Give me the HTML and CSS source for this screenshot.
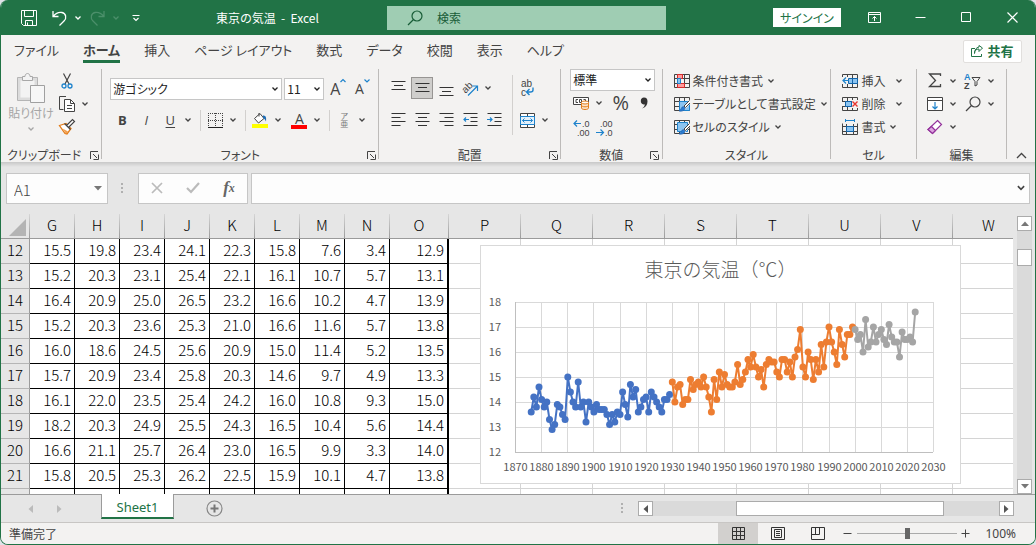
FILE: index.html
```html
<!DOCTYPE html>
<html lang="ja">
<head>
  <meta charset="UTF-8" />
  <meta name="viewport" content="width=device-width, initial-scale=1.0"/>
  <title>東京の気温 - Excel</title>
  <link rel="stylesheet" href="styles.css">
</head>
<body>
  <svg class="defs" aria-hidden="true">
    <symbol id="chev" viewBox="0 0 8 8"><path d="M1.5 2.5 4 5l2.500-2.500" fill="none" stroke="currentColor" stroke-width="1.300"/></symbol>
    <symbol id="launch" viewBox="0 0 9 9"><path d="M.5 8V.5H8M3 3l4 4M8.500 3.500v5h-5" fill="none" stroke="currentColor"/></symbol>
    <symbol id="lens" viewBox="0 0 16 16"><circle cx="10" cy="6" r="5" fill="none" stroke="currentColor" stroke-width="1.200"/><path d="M6.500 9.500 1 15" stroke="currentColor" stroke-width="1.300"/></symbol>
    <symbol id="table" viewBox="0 0 16 16"><path d="M.5 1.500h15v13H.5zM.5 5.500h15M.5 10.500h15M5.500 1.500v13M10.500 1.500v13" fill="none" stroke="#444"/></symbol>
    <symbol id="brushpen" viewBox="0 0 16 16"><path d="M16 3.500 9.500 10 6 15.500l5-2L16 8z" fill="#f3f2f1"/><path d="M15.500 4.500 10 10l1.500 1.500L16 7" fill="#fff" stroke="#444"/><path d="M9.500 10.500c-2 0-2 3-4.500 4.500 3 .5 6-.5 6-3z" fill="#2b7cd3" stroke="#1e5fa8" stroke-width=".7"/></symbol>
  </svg>

  <div class="window">
    <header class="titlebar">
      <div class="quick">
        <button class="tb-btn" aria-label="上書き保存"><svg width="16" height="16" viewBox="0 0 16 16"><path d="M.5.500h15v15h-13l-2-2zM3.500.500v6h9v-6M4.500 15.500v-5h7v5M6.500 12.500v3" fill="none" stroke="#fff"/></svg></button>
        <button class="tb-btn" aria-label="元に戻す"><svg width="15" height="16" viewBox="0 0 15 16"><path d="M1 1v5.500h5.500M1.300 6.200C4 3 7 1.800 10 2.500c4 1 5 5.500 2 8.500L7.500 15.500" fill="none" stroke="#fff" stroke-width="1.300"/></svg></button>
        <button class="tb-drop" aria-label="元に戻す一覧"><svg width="8" height="8"><use href="#chev"/></svg></button>
        <button class="tb-btn faded" aria-label="やり直し"><svg width="15" height="16" viewBox="0 0 15 16"><path d="M14 1v5.500H8.500M13.700 6.200C11 3 8 1.800 5 2.500 1 3.500 0 8 3 11l4.500 4.500" fill="none" stroke="currentColor" stroke-width="1.300"/></svg></button>
        <button class="tb-drop faded" aria-label="やり直し一覧"><svg width="8" height="8"><use href="#chev"/></svg></button>
        <button class="tb-drop customize" aria-label="カスタマイズ"><svg width="8" height="8" viewBox="0 0 8 8"><path d="M.5 1.500h7M1.500 4 4 6.500 6.500 4" fill="none" stroke="#fff" stroke-width="1.200"/></svg></button>
      </div>
      <div class="doc-title">東京の気温&nbsp; -&nbsp; Excel</div>
      <label class="search">
        <svg width="16" height="16"><use href="#lens"/></svg>
        <input type="text" placeholder="検索" aria-label="検索">
      </label>
      <div class="win-tools">
        <button class="signin">サインイン</button>
        <button class="win-btn" aria-label="リボンの表示オプション"><svg width="13" height="11" viewBox="0 0 13 11"><path d="M.5.500h12v10H.5zM.5 2.500h12M6.500 9V4.500M4.500 6.500l2-2 2 2" fill="none" stroke="#fff"/></svg></button>
        <button class="win-btn" aria-label="最小化"><svg width="11" height="11" viewBox="0 0 11 11"><path d="M.5 5.500h10" stroke="#fff"/></svg></button>
        <button class="win-btn" aria-label="最大化"><svg width="11" height="11" viewBox="0 0 11 11"><path d="M.5.500h9v9h-9z" fill="none" stroke="#fff"/></svg></button>
        <button class="win-btn" aria-label="閉じる"><svg width="11" height="11" viewBox="0 0 11 11"><path d="m.5.500 10 10M10.500.500l-10 10" stroke="#fff" stroke-width="1.200"/></svg></button>
      </div>
    </header>

    <nav class="tabs">
      <a href="#">ファイル</a>
      <a href="#" class="active">ホーム</a>
      <a href="#">挿入</a>
      <a href="#">ページ レイアウト</a>
      <a href="#">数式</a>
      <a href="#">データ</a>
      <a href="#">校閲</a>
      <a href="#">表示</a>
      <a href="#">ヘルプ</a>
      <button class="share"><svg width="12" height="12" viewBox="0 0 12 12"><path d="M4 3.500H.5v8h10V9M3.500 8.500c0-3 1.500-4.500 4.500-4.500v2.500l3.500-3.500L8 .500V2C5 2.500 3.500 5 3.500 8.500z" fill="none" stroke="#217346"/></svg>共有</button>
    </nav>

    <div class="ribbon">
      <section class="group clip">
        <div class="tools">
          <button class="paste" disabled>
            <svg width="28" height="30" viewBox="0 0 28 30"><path d="M.5 4.500h20v23H.5z" fill="#dcdcdc" stroke="#b5b5b5"/><path d="M3.500 7.500h14v17h-14z" fill="#f3f3f3"/><path d="M5.500 7.500v-4H8c0-4 5-4 5 0h2.500v4z" fill="#f3f3f3" stroke="#a8a8a8"/><path d="M13.500 12.500h14v17h-14z" fill="#f7f7f7" stroke="#a0a0a0"/></svg>
            <span>貼り付け</span>
            <svg width="8" height="8"><use href="#chev"/></svg>
          </button>
          <div class="clip-side">
            <button class="tool" aria-label="切り取り"><svg width="12" height="16" viewBox="0 0 12 16"><path d="M2.500.500 8 11M9.500.500 4 11" stroke="#444" stroke-width="1.200"/><circle cx="3" cy="13" r="2" fill="none" stroke="#1e83cc" stroke-width="1.300"/><circle cx="9" cy="13" r="2" fill="none" stroke="#1e83cc" stroke-width="1.300"/></svg></button>
            <div class="row"><button class="tool" aria-label="コピー"><svg width="16" height="16" viewBox="0 0 16 16"><path d="M4.500 13.500h-4V.500h6.500" fill="none" stroke="#444"/><path d="M5.500 3.500h6l4 4v8h-10z" fill="#fff" stroke="#444"/><path d="M11.500 3.500v4h4M8 9.500h5M8 12.500h5" fill="none" stroke="#444"/></svg></button><button class="drop" aria-label="コピー一覧"><svg width="8" height="8"><use href="#chev"/></svg></button></div>
            <button class="tool" aria-label="書式のコピー"><svg width="16" height="16" viewBox="0 0 16 16"><path d="M.5 6.500 7 4.500l5 5-4 5.500-2-.5z" fill="#fff" stroke="#e37d1b" stroke-width="1.300"/><path d="M3.500 9.500 9 12.500 7 15z" fill="#f3a04e"/><path d="m7.500 6.500 6-6 2 2-6 6zM5.500 4.500l6 6" fill="#fff" stroke="#444" stroke-width="1.200"/></svg></button>
          </div>
        </div>
        <footer><span>クリップボード</span><button class="launcher" aria-label="クリップボード設定"><svg width="9" height="9"><use href="#launch"/></svg></button></footer>
      </section>

      <section class="group font">
        <div class="tools">
          <div class="row">
            <div class="combo wide"><select aria-label="フォント"><option>游ゴシック</option></select><svg width="8" height="8"><use href="#chev"/></svg></div>
            <div class="combo size"><select aria-label="フォント サイズ"><option>11</option></select><svg width="8" height="8"><use href="#chev"/></svg></div>
            <button class="tool letter big" aria-label="フォント サイズの拡大">A<svg width="6" height="12" viewBox="0 0 6 12"><path d="m.5 4 2.500-2.500L5.500 4" fill="none" stroke="#1e83cc" stroke-width="1.200"/></svg></button>
            <button class="tool letter" aria-label="フォント サイズの縮小">A<svg width="6" height="12" viewBox="0 0 6 12"><path d="M.5 1.500 3 4l2.500-2.500" fill="none" stroke="#1e83cc" stroke-width="1.200"/></svg></button>
          </div>
          <div class="row">
            <button class="tool b">B</button><button class="tool i">I</button><button class="tool u">U</button><button class="drop" aria-label="下線一覧"><svg width="8" height="8"><use href="#chev"/></svg></button>
            <i class="sep"></i>
            <button class="tool" aria-label="罫線"><svg width="15" height="15" viewBox="0 0 15 15"><path d="M.5 0v14M7.500 0v14M14.500 0v14M0 .5h15M0 7.500h15" fill="none" stroke="#444" stroke-dasharray="1 1"/><path d="M0 14.500h15" stroke="#222"/></svg></button><button class="drop" aria-label="罫線一覧"><svg width="8" height="8"><use href="#chev"/></svg></button>
            <i class="sep"></i>
            <button class="tool" aria-label="塗りつぶしの色"><svg width="16" height="16" viewBox="0 0 16 16"><path d="m2.500 6.500 5.500-5 4 5-5.500 4.500zM7 4.500V1" fill="#fff" stroke="#444"/><path d="M11 3.500c3 0 3.500 2 3 6-1-2-1.500-3-3-3.500z" fill="#1e6db5"/><path d="M0 12h16v4H0z" fill="#ff0"/></svg></button><button class="drop" aria-label="塗りつぶしの色一覧"><svg width="8" height="8"><use href="#chev"/></svg></button>
            <button class="tool fontcolor" aria-label="フォントの色"><span>A</span></button><button class="drop" aria-label="フォントの色一覧"><svg width="8" height="8"><use href="#chev"/></svg></button>
            <i class="sep"></i>
            <button class="tool ruby"><span>ア</span><span>亜</span></button><button class="drop" aria-label="ふりがな一覧"><svg width="8" height="8"><use href="#chev"/></svg></button>
          </div>
        </div>
        <footer><span>フォント</span><button class="launcher" aria-label="フォント設定"><svg width="9" height="9"><use href="#launch"/></svg></button></footer>
      </section>

      <section class="group align">
        <div class="tools">
          <div class="align-rows">
            <div class="row">
              <button class="tool" aria-label="上揃え"><svg width="15" height="16" viewBox="0 0 15 16"><path d="M.5 1.500h14M3 5.500h9M.5 9.500h14" stroke="#333"/></svg></button>
              <button class="tool pressed" aria-label="上下中央揃え"><svg width="15" height="16" viewBox="0 0 15 16"><path d="M.5 3.500h14M3 7.500h9M.5 11.500h14" stroke="#333"/></svg></button>
              <button class="tool" aria-label="下揃え"><svg width="15" height="16" viewBox="0 0 15 16"><path d="M.5 7.500h14M3 11.500h9M.5 15.500h14" stroke="#333"/></svg></button>
              <button class="tool" aria-label="方向"><svg width="17" height="16" viewBox="0 0 17 16"><text x="0" y="11" class="ico-text" transform="rotate(-45 5 8)">ab</text><path d="M6 15.500 15 6.500M10.500 6H15.500v5" fill="none" stroke="#1e83cc" stroke-width="1.200"/></svg></button><button class="drop" aria-label="方向一覧"><svg width="8" height="8"><use href="#chev"/></svg></button>
            </div>
            <div class="row">
              <button class="tool" aria-label="左揃え"><svg width="15" height="14" viewBox="0 0 15 14"><path d="M.5.500h14M.5 4.500h9M.5 8.500h14M.5 12.500h9" stroke="#333"/></svg></button>
              <button class="tool" aria-label="中央揃え"><svg width="15" height="14" viewBox="0 0 15 14"><path d="M.5.500h14M3 4.500h9M.5 8.500h14M3 12.500h9" stroke="#333"/></svg></button>
              <button class="tool" aria-label="右揃え"><svg width="15" height="14" viewBox="0 0 15 14"><path d="M.5.500h14M5.500 4.500h9M.5 8.500h14M5.500 12.500h9" stroke="#333"/></svg></button>
              <button class="tool" aria-label="インデントを減らす"><svg width="15" height="14" viewBox="0 0 15 14"><path d="M.5.500h14M7.500 4.500h7M7.500 8.500h7M.5 12.500h14" stroke="#333"/><path d="M6 6.500H1M3 4.500l-2 2 2 2" fill="none" stroke="#1e83cc" stroke-width="1.200"/></svg></button>
              <button class="tool" aria-label="インデントを増やす"><svg width="15" height="14" viewBox="0 0 15 14"><path d="M.5.500h14M7.500 4.500h7M7.500 8.500h7M.5 12.500h14" stroke="#333"/><path d="M0 6.500h5M3 4.500l2 2-2 2" fill="none" stroke="#1e83cc" stroke-width="1.200"/></svg></button>
            </div>
          </div>
          <i class="sep tall"></i>
          <div class="align-rows">
            <button class="tool" aria-label="折り返して全体を表示する"><svg width="16" height="20" viewBox="0 0 16 20"><text x="2" y="9" class="ico-text">ab</text><text x="2" y="18" class="ico-text">c</text><path d="M14 9.500V12c0 1.500-1 2-2.500 2H8M10.500 11l-3 3 3 3" fill="none" stroke="#1e83cc" stroke-width="1.400"/></svg></button>
            <div class="row"><button class="tool" aria-label="セルを結合して中央揃え"><svg width="15" height="15" viewBox="0 0 15 15"><path d="M.5.500h14v14H.5zM.5 3.500h14M.5 11.500h14M7.500.500v3M7.500 11.500v3" fill="#fff" stroke="#444"/><path d="M.5 3.500h14v8H.5z" fill="#e4f1fb" stroke="#1e83cc"/><path d="M2.500 7.500h10M4.500 5.500l-2 2 2 2M10.500 5.500l2 2-2 2" fill="none" stroke="#1e83cc"/></svg></button><button class="drop" aria-label="結合一覧"><svg width="8" height="8"><use href="#chev"/></svg></button></div>
          </div>
        </div>
        <footer><span>配置</span><button class="launcher" aria-label="配置設定"><svg width="9" height="9"><use href="#launch"/></svg></button></footer>
      </section>

      <section class="group number">
        <div class="tools">
          <div class="combo fmt"><select aria-label="数値の書式"><option>標準</option></select><svg width="8" height="8"><use href="#chev"/></svg></div>
          <div class="row">
            <button class="tool" aria-label="通貨表示形式"><svg width="17" height="14" viewBox="0 0 17 14"><path d="M.5 1.500h15v7H.5z" fill="#fff" stroke="#444"/><path d="M5 3.500H3v3h2M8.500 6.500v-3h-2v3zM10.500 3.500h2v2" fill="none" stroke="#444"/><path d="M8.500 6.500v5.500c0 2 7 2 7 0V6.500z" fill="#fce3c8" stroke="#e37d1b"/><ellipse cx="12" cy="6.500" rx="3.500" ry="1.500" fill="#fff" stroke="#e37d1b"/><path d="M8.500 9.300c0 2 7 2 7 0" fill="none" stroke="#e37d1b"/></svg></button><button class="drop" aria-label="通貨一覧"><svg width="8" height="8"><use href="#chev"/></svg></button>
            <button class="tool percent">%</button>
            <button class="tool" aria-label="桁区切りスタイル"><svg width="8" height="12" viewBox="0 0 8 12"><path d="M4 .500c2.500 0 3.500 1.500 3.500 4C7.500 8 5.500 10.500 2 11.500c2-1.500 2.800-2.800 2.800-4.300C2 8 .8 6 .8 4 .8 2 2 .500 4 .500z" fill="#333"/></svg></button>
          </div>
          <div class="row decimals">
            <button class="tool" aria-label="小数点以下の表示桁数を増やす"><svg width="18" height="20" viewBox="0 0 18 20"><path d="M8 5.500H1M4 2.500l-3 3 3 3" fill="none" stroke="#1e83cc" stroke-width="1.200"/><text x="9" y="9" class="dec-text">.0</text><text x="4" y="18" class="dec-text">.00</text></svg></button>
            <button class="tool" aria-label="小数点以下の表示桁数を減らす"><svg width="18" height="20" viewBox="0 0 18 20"><path d="M0 14.500h7M4.500 11.500l3 3-3 3" fill="none" stroke="#1e83cc" stroke-width="1.200"/><text x="4" y="9" class="dec-text">.00</text><text x="9" y="18" class="dec-text">.0</text></svg></button>
          </div>
        </div>
        <footer><span>数値</span><button class="launcher" aria-label="数値設定"><svg width="9" height="9"><use href="#launch"/></svg></button></footer>
      </section>

      <section class="group style">
        <div class="tools">
          <button class="item"><svg width="16" height="16" viewBox="0 0 16 16"><use href="#table"/><path d="M3.500 1.500h5v4h-5zM3.500 10.500h7v4h-7z" fill="#ff9c9c" stroke="#d92b2b"/><path d="M3.500 5.500h3v5h-3z" fill="#8cc4f0" stroke="#1e83cc"/></svg>条件付き書式<svg width="8" height="8"><use href="#chev"/></svg></button>
          <button class="item"><svg width="16" height="16" viewBox="0 0 16 16"><use href="#table"/><path d="M5.500 5.500h10v9h-10z" fill="#8cc4f0" stroke="#1e83cc"/><use href="#brushpen"/></svg>テーブルとして書式設定<svg width="8" height="8"><use href="#chev"/></svg></button>
          <button class="item"><svg width="16" height="16" viewBox="0 0 16 16"><use href="#table"/><path d="M3.500 3.500h10v9h-10z" fill="#8cc4f0" stroke="#1e83cc"/><use href="#brushpen"/></svg>セルのスタイル<svg width="8" height="8"><use href="#chev"/></svg></button>
        </div>
        <footer><span>スタイル</span></footer>
      </section>

      <section class="group cells">
        <div class="tools">
          <button class="item wide-gap"><svg width="16" height="16" viewBox="0 0 16 16"><use href="#table"/><path d="M0 4h7v7H0z" fill="#f3f2f1"/><path d="M6.500 5.500h9v5h-9z" fill="#8cc4f0" stroke="#1265ab"/><path d="M10.500 5.500v5" stroke="#1265ab"/><path d="M7 7.500H1M4 4.500l-3 3 3 3" fill="none" stroke="#1e83cc" stroke-width="1.200"/></svg>挿入<svg width="8" height="8"><use href="#chev"/></svg></button>
          <button class="item wide-gap"><svg width="16" height="16" viewBox="0 0 16 16"><use href="#table"/><path d="M0 6h4v4H0zM10 4h6v8h-6z" fill="#f3f2f1"/><path d="M3.500 5.500h6v5h-6z" fill="#8cc4f0" stroke="#1265ab"/><path d="m10.500 5.500 5 5M15.500 5.500l-5 5" stroke="#e8352e" stroke-width="1.400"/></svg>削除<svg width="8" height="8"><use href="#chev"/></svg></button>
          <button class="item"><svg width="16" height="16" viewBox="0 0 16 16"><path d="M.5 4.500v11h15v-11M.5 7.500h15M.5 12.500h15M4.500 5v10M11.500 5v10" fill="none" stroke="#444"/><path d="M4.500 7.500h7v5h-7z" fill="#8cc4f0" stroke="#1265ab"/><path d="M3.500 1.500h9M3.500 0v3M12.500 0v3" stroke="#1e83cc"/></svg>書式<svg width="8" height="8"><use href="#chev"/></svg></button>
        </div>
        <footer><span>セル</span></footer>
      </section>

      <section class="group edit">
        <div class="tools">
          <div class="row">
            <button class="tool" aria-label="オート SUM"><svg width="14" height="15" viewBox="0 0 14 15"><path d="M12.500 3V1H1.500l6 6.500-6 6h11V11" fill="none" stroke="#444" stroke-width="1.300"/></svg></button><button class="drop" aria-label="オート SUM 一覧"><svg width="8" height="8"><use href="#chev"/></svg></button>
            <button class="tool" aria-label="並べ替えとフィルター"><svg width="17" height="20" viewBox="0 0 17 20"><text x="0" y="9" class="sort-a">A</text><text x="0" y="18" class="sort-z">Z</text><path d="M8 6.500h8l-3 4V14l-2 1v-4.500z" fill="none" stroke="#444"/></svg></button><button class="drop" aria-label="並べ替え一覧"><svg width="8" height="8"><use href="#chev"/></svg></button>
          </div>
          <div class="row">
            <button class="tool" aria-label="フィル"><svg width="16" height="14" viewBox="0 0 16 14"><path d="M.5.500h15v13H.5zM.5 3.500h15" fill="#fff" stroke="#444"/><path d="M8 5v7M5.500 9.500 8 12l2.500-2.500" fill="none" stroke="#1e83cc" stroke-width="1.200"/></svg></button><button class="drop" aria-label="フィル一覧"><svg width="8" height="8"><use href="#chev"/></svg></button>
            <button class="tool" aria-label="検索と選択"><svg width="16" height="16"><use href="#lens"/></svg></button><button class="drop" aria-label="検索一覧"><svg width="8" height="8"><use href="#chev"/></svg></button>
          </div>
          <div class="row">
            <button class="tool" aria-label="クリア"><svg width="16" height="16" viewBox="0 0 16 16"><path d="M10.500 1.500 14.500 5.500 5.500 14.500 1 10.500z" fill="#fff" stroke="#93319b" stroke-width="1.200"/><path d="m4.500 7.500 4 4-3 3L1 10.500z" fill="#dda5e0" stroke="#93319b" stroke-width="1.200"/></svg></button><button class="drop" aria-label="クリア一覧"><svg width="8" height="8"><use href="#chev"/></svg></button>
          </div>
        </div>
        <footer><span>編集</span></footer>
      </section>
      <div class="collapse"><button aria-label="リボンを折りたたむ"><svg width="11" height="7" viewBox="0 0 11 7"><path d="m1 6 4.500-4.500L10 6" fill="none" stroke="#444" stroke-width="1.300"/></svg></button></div>
    </div>

    <div class="formula">
      <div class="namebox"><input type="text" value="A1" aria-label="名前ボックス"><svg width="8" height="5" viewBox="0 0 8 5"><path d="M0 0h8L4 4.500z" fill="#777"/></svg></div>
      <svg width="3" height="11" viewBox="0 0 3 11"><path d="M0 0h2v2H0zM0 4h2v2H0zM0 8h2v2H0z" fill="#b0b0b0"/></svg>
      <div class="fx-box">
        <button aria-label="キャンセル"><svg width="12" height="12" viewBox="0 0 12 12"><path d="m1 1 10 10M11 1 1 11" stroke="#bbb" stroke-width="1.700"/></svg></button>
        <button aria-label="入力"><svg width="14" height="12" viewBox="0 0 14 12"><path d="m1 6 4 4 8-9" fill="none" stroke="#bbb" stroke-width="2.200"/></svg></button>
        <button class="fx">f<span>x</span></button>
      </div>
      <div class="fbar"><input type="text" aria-label="数式バー"><svg width="10" height="10"><use href="#chev"/></svg></div>
    </div>

    <main class="sheet-area">
      <div class="sheet">
        <table class="grid" id="grid"></table>
        <div class="chart" id="chart"></div>
      </div>
      <div class="vscroll">
        <button aria-label="上へ"><svg width="8" height="5" viewBox="0 0 8 5"><path d="M0 5h8L4 .500z" fill="#777"/></svg></button>
        <div class="vthumb"></div>
        <button aria-label="下へ"><svg width="8" height="5" viewBox="0 0 8 5"><path d="M0 0h8L4 4.500z" fill="#777"/></svg></button>
      </div>
    </main>

    <div class="sheetbar">
      <div class="sheetnav">
        <button aria-label="前のシート"><svg width="5" height="8" viewBox="0 0 5 8"><path d="M5 0v8L.5 4z" fill="#bbb"/></svg></button>
        <button aria-label="次のシート"><svg width="5" height="8" viewBox="0 0 5 8"><path d="M0 0v8l4.500-4z" fill="#bbb"/></svg></button>
      </div>
      <a href="#" class="sheet-tab">Sheet1</a>
      <button class="add" aria-label="新しいシート"><svg width="17" height="17" viewBox="0 0 17 17"><circle cx="8.500" cy="8.500" r="7.500" fill="none" stroke="#888" stroke-width="1.200"/><path d="M8.500 4.500v8M4.500 8.500h8" stroke="#777" stroke-width="2"/></svg></button>
      <svg class="grip" width="3" height="11" viewBox="0 0 3 11"><path d="M0 0h2v2H0zM0 4h2v2H0zM0 8h2v2H0z" fill="#b0b0b0"/></svg>
      <div class="hscroll">
        <button aria-label="左へ"><svg width="5" height="8" viewBox="0 0 5 8"><path d="M5 0v8L.5 4z" fill="#555"/></svg></button>
        <div class="htrack"><div class="hthumb"></div></div>
        <button aria-label="右へ"><svg width="5" height="8" viewBox="0 0 5 8"><path d="M0 0v8l4.500-4z" fill="#555"/></svg></button>
      </div>
    </div>

    <footer class="status">
      <span>準備完了</span>
      <div class="views">
        <button class="active" aria-label="標準"><svg width="13" height="13" viewBox="0 0 13 13"><path d="M.5.500h12v12H.5zM.5 4.500h12M.5 8.500h12M4.500.500v12M8.500.500v12" fill="none" stroke="#333"/></svg></button>
        <button aria-label="ページ レイアウト"><svg width="14" height="13" viewBox="0 0 14 13"><path d="M.5.500h13v12H.5zM3.500 2.500h7v8h-7zM5 4.500h4M5 6.500h4M5 8.500h4" fill="none" stroke="#333"/></svg></button>
        <button aria-label="改ページ プレビュー"><svg width="14" height="13" viewBox="0 0 14 13"><path d="M.5.500h13v12H.5zM.5 7.500h8v-7M4.500.500v7" fill="none" stroke="#333"/></svg></button>
      </div>
      <button class="zoom-btn" aria-label="縮小"><svg width="9" height="9" viewBox="0 0 9 9"><path d="M.5 4.500h8" stroke="#444"/></svg></button>
      <input type="range" min="10" max="190" value="100" aria-label="ズーム">
      <button class="zoom-btn" aria-label="拡大"><svg width="9" height="9" viewBox="0 0 9 9"><path d="M.5 4.500h8M4.500.500v8" stroke="#444"/></svg></button>
      <span class="pct">100%</span>
    </footer>
  </div>

  <script>
    const cols = ['G','H','I','J','K','L','M','N','O','P','Q','R','S','T','U','V','W'];
    const filas = [
      [12, '15.5','19.8','23.4','24.1','22.3','15.8','7.6','3.4','12.9'],
      [13, '15.2','20.3','23.1','25.4','22.1','16.1','10.7','5.7','13.1'],
      [14, '16.4','20.9','25.0','26.5','23.2','16.6','10.2','4.7','13.9'],
      [15, '15.2','20.3','23.6','25.3','21.0','16.6','11.6','5.7','13.8'],
      [16, '16.0','18.6','24.5','25.6','20.9','15.0','11.4','5.2','13.5'],
      [17, '15.7','20.9','23.4','25.8','20.3','14.6','9.7','4.9','13.3'],
      [18, '16.1','22.0','23.5','25.4','24.2','16.0','10.8','9.3','15.0'],
      [19, '18.2','20.3','24.9','25.5','24.3','16.5','10.4','5.6','14.4'],
      [20, '16.6','21.1','25.7','26.4','23.0','16.5','9.9','3.3','14.0'],
      [21, '15.8','20.5','25.3','26.2','22.5','15.9','10.1','4.7','13.8'],
      ['', '','','','','','','','','']
    ];

    // 年平均気温
    const series = [
      { start: 1876, color: '#4472c4', data: [13.6,14.2,13.8,14.6,14.1,13.8,14.0,13.3,12.9,13.1,13.9,13.8,13.5,13.3,15.0,14.4,14.0,13.8,14.8,13.8,14.0,13.2,14.0,13.8,13.6,13.9,13.7,13.7,13.7,13.5,13.1,13.5,13.2,13.6,13.5,14.4,13.9,13.4,14.7,14.2,14.5,13.6,13.8,14.1,14.2,13.6,14.4,14.2,14.0,13.8,13.6,14.1,14.1,14.3] },
      { start: 1930, color: '#ed7d31', data: [14.8,14.0,14.6,14.7,13.9,14.1,14.1,14.9,14.5,14.7,14.8,14.6,15.0,14.6,14.2,13.6,14.9,14.1,15.2,14.6,15.1,14.7,14.6,14.6,14.8,15.5,14.7,14.9,15.2,15.7,15.4,15.9,15.4,15.0,15.3,14.6,15.5,15.7,15.6,15.6,15.2,15.0,15.7,15.7,15.2,15.6,15.0,15.8,16.1,16.9,15.4,15.0,16.0,15.7,14.9,15.7,15.2,16.3,15.4,16.4,17.0,16.4,16.0,15.5,16.9,16.3,15.8,16.7,16.7,17.0] },
      { start: 2000, color: '#a5a5a5', data: [16.9,16.5,16.7,16.0,17.3,16.2,16.4,17.0,16.4,16.7,16.9,16.5,16.3,17.1,16.6,16.4,16.4,15.8,16.8,16.5,16.5,16.6,16.4,17.6] }
    ];

    function drawGrid() {
      const head = cols.map(c => `<th scope="col">${c}</th>`).join('');
      const body = filas.map(f => `
        <tr><th scope="row">${f[0]}</th>
          ${f.slice(1).map(v => `<td class="num">${v}</td>`).join('')}
          ${cols.slice(9).map(() => '<td></td>').join('')}
        </tr>`).join('');
      document.getElementById('grid').innerHTML = `
        <colgroup><col class="c-row"><col span="8" class="c-month"><col class="c-avg"><col span="8" class="c-empty"></colgroup>
        <thead><tr><td class="corner"><svg width="17" height="17" viewBox="0 0 17 17"><path d="M17 0v17H0z" fill="#b4b4b4"/></svg></td>${head}</tr></thead>
        <tbody>${body}</tbody>`;
    }

    function drawChart() {
      const left = 34, right = 452, top = 56, unit = 25;
      const x = y => left + (y - 1870) * (right - left) / 160;
      const y = t => top + (18 - t) * unit;
      let s = '';
      for (let t = 12; t <= 18; t++) {
        s += `<path d="M${left} ${y(t) + 0.5}H${right}" class="${t === 12 ? 'axis' : 'line'}"/>`;
        s += `<text x="20" y="${y(t) + 4}" text-anchor="end">${t}</text>`;
      }
      for (let a = 1870; a <= 2030; a += 10) {
        const gx = Math.round(x(a)) + 0.5;
        s += `<path d="M${gx} ${top}V${y(12)}" class="${a === 1870 ? 'axis' : 'line'}"/>`;
        s += `<text x="${gx}" y="225" text-anchor="middle">${a}</text>`;
      }
      series.forEach(g => {
        const pts = g.data.map((v, i) => [(x(g.start + i) + 0.5).toFixed(1), y(v).toFixed(1)]);
        s += `<polyline points="${pts.map(p => p.join(',')).join(' ')}" fill="none" stroke="${g.color}" stroke-width="2"/>`;
        s += pts.map(p => `<circle cx="${p[0]}" cy="${p[1]}" r="3.5" fill="${g.color}"/>`).join('');
      });
      document.getElementById('chart').innerHTML =
        `<h2>東京の気温（℃）</h2><svg width="479" height="237" viewBox="0 0 479 237">${s}</svg>`;
    }

    drawGrid();
    drawChart();
  </script>
</body>
</html>
```
FILE: styles.css
```css
:root {
  --green: #217346;
  --ribbon: #f3f2f1;
  --chrome: #e6e6e6;
  --text: #444444;
  --line: #c6c6c6;
}

* {
  box-sizing: border-box;
}

body {
  margin: 0;
  background: #dfe3e8;
  color: var(--text);
  font-family: "Noto Sans CJK JP", sans-serif;
  font-size: 12px;
  line-height: 16px;
  font-feature-settings: "palt";
}

button, input, select {
  margin: 0;
  padding: 0;
  border: 0;
  border-radius: 0;
  background: none;
  color: inherit;
  font: inherit;
  font-feature-settings: inherit;
}

button {
  display: flex;
  align-items: center;
  justify-content: center;
}

a {
  color: inherit;
  text-decoration: none;
}

svg {
  display: block;
  flex: none;
  overflow: visible;
}

.defs {
  position: absolute;
  width: 0;
  height: 0;
}

.window {
  display: flex;
  flex-direction: column;
  height: 100vh;
  border: 1px solid var(--green);
  border-top: 0;
  border-radius: 8px;
  overflow: hidden;
  background: var(--chrome);
}

/* title bar */
.titlebar {
  display: grid;
  grid-template-columns: 147px 239px minmax(100px, 279px) 1fr;
  align-items: center;
  flex: none;
  height: 35px;
  background: var(--green);
  color: #fff;
}

.quick {
  display: flex;
  align-items: center;
  padding-left: 16px;
}

.tb-btn {
  width: 24px;
  height: 24px;
}

.quick .tb-btn + .tb-btn {
  margin-left: 6px;
}

.tb-drop {
  width: 14px;
  height: 24px;
}

.quick .faded {
  color: #4b8f6a;
}

.customize {
  margin-left: 6px;
}

.doc-title {
  text-align: center;
}

.search {
  display: flex;
  align-items: center;
  gap: 14px;
  height: 24px;
  padding-left: 20px;
  background: #9fcdb3;
  color: #185c37;
}

.search input {
  flex: 1;
  min-width: 0;
}

.search input::placeholder {
  color: #185c37;
  opacity: 1;
}

.win-tools {
  display: flex;
  align-items: center;
  justify-content: flex-end;
}

.signin {
  width: 68px;
  height: 19px;
  margin-right: 10px;
  background: #fff;
  color: var(--green);
}

.win-btn {
  width: 46px;
  height: 34px;
}

/* ribbon tabs */
.tabs {
  display: flex;
  align-items: center;
  gap: 24px;
  flex: none;
  height: 32px;
  padding: 0 13px 0 13px;
  background: var(--ribbon);
  font-size: 13px;
}

.tabs a {
  line-height: 20px;
  border-bottom: 3px solid transparent;
}

.tabs .active {
  border-color: var(--green);
  font-weight: bold;
}

.share {
  gap: 4px;
  width: 59px;
  height: 23px;
  margin-left: auto;
  border: 1px solid #e1dfdd;
  border-radius: 2px;
  background: #fff;
  color: var(--green);
  font-weight: bold;
}

/* ribbon groups */
.ribbon {
  display: flex;
  flex: none;
  height: 95px;
  padding: 2px 0 3px;
  background: var(--ribbon);
}

.group {
  display: flex;
  flex-direction: column;
  min-width: 0;
  border-right: 1px solid #bdbbb9;
}

.clip { flex: 101 1 0; }
.font { flex: 278 1 0; }
.align { flex: 182 1 0; }
.number { flex: 101 1 0; }
.style { flex: 169 1 0; }
.cells { flex: 85 1 0; }
.edit { flex: 90 1 0; }

.tools {
  display: flex;
  flex-direction: column;
  flex: 1;
  white-space: nowrap;
}

.group footer {
  display: grid;
  grid-template-columns: 1fr 14px;
  align-items: center;
  flex: none;
  height: 12px;
}

.group footer span {
  padding-left: 14px;
  text-align: center;
}

.clip footer span {
  padding-left: 0;
}

.row {
  display: flex;
  align-items: center;
}

.tool {
  width: 24px;
  height: 22px;
}

.drop {
  width: 12px;
  height: 22px;
}

.sep {
  width: 1px;
  height: 21px;
  margin: 0 2px 0 6px;
  background: #d2d0ce;
}

.clip .tools {
  flex-direction: row;
  padding-left: 6px;
}

.paste {
  flex-direction: column;
  justify-content: flex-start;
  width: 48px;
  padding-top: 4px;
  color: #a6a6a6;
}

.paste span {
  padding: 2px 0 4px;
}

.clip-side .tool {
  height: 23px;
}

.font .tools {
  gap: 9px;
  padding: 9px 0 0 8px;
}

.combo {
  display: flex;
  align-items: center;
  height: 22px;
  padding-right: 2px;
  border: 1px solid var(--line);
  background: #fff;
  color: #222;
}

.combo select {
  flex: 1;
  min-width: 0;
  padding-left: 2px;
  appearance: none;
}

.wide {
  width: 172px;
  margin-right: 2px;
}

.size {
  width: 40px;
  margin-right: 2px;
}

.letter {
  align-items: center;
  font-family: "Open Sans", sans-serif;
  font-size: 14px;
}

.letter svg {
  align-self: flex-start;
}

.big {
  font-size: 16px;
}

.b, .i, .u {
  font-family: "Open Sans", sans-serif;
  font-size: 13px;
}

.b {
  font-weight: bold;
}

.i {
  font-style: italic;
}

.u {
  text-decoration: underline;
  text-underline-offset: 2px;
}

.drop + .fontcolor {
  margin-left: 3px;
}

.fontcolor span {
  width: 16px;
  border-bottom: 4px solid #ff0000;
  font-family: "Open Sans", sans-serif;
  font-size: 14px;
  line-height: 13px;
}

.ruby {
  flex-direction: column;
  color: #777;
  font-size: 8px;
  line-height: 8px;
}

.align .tools {
  flex-direction: row;
  padding: 8px 0 0 7px;
}

.align-rows {
  display: flex;
  flex-direction: column;
  gap: 10px;
}

.tall {
  height: 60px;
  margin-top: -2px;
}

.pressed {
  width: 22px;
  margin: 0 1px;
  border: 1px solid #979593;
  background: #cfcecc;
}

.ico-text,
.dec-text,
.sort-a,
.sort-z {
  fill: #444;
  font-family: "Liberation Sans", sans-serif;
  font-size: 9px;
}

.ico-text {
  font-size: 10px;
}

.sort-a {
  fill: #1e83cc;
  font-weight: bold;
}

.sort-z {
  font-weight: bold;
}

.number .tools {
  gap: 1px;
  padding-left: 9px;
}

.number .tool {
  width: 23px;
}

.fmt {
  width: 85px;
}

.number .percent {
  margin-left: 4px;
  font-family: "Open Sans", sans-serif;
  font-size: 20px;
}

.decimals {
  padding-top: 2px;
}

.style .tools,
.cells .tools {
  align-items: flex-start;
  padding-left: 11px;
}

.item {
  gap: 4px;
  height: 23px;
}

.item svg:first-child {
  margin-right: -1px;
}

.wide-gap {
  gap: 10px;
}

.wide-gap svg:first-child {
  margin-right: -7px;
}

.edit .tools {
  padding-left: 6px;
}

.edit .tool {
  height: 23px;
}

.edit .drop + .tool {
  margin-left: 2px;
}

.collapse {
  display: flex;
  flex: 28 1 0;
  align-items: flex-end;
  justify-content: center;
}

/* formula bar */
.formula {
  display: flex;
  align-items: center;
  flex: none;
  height: 52px;
  padding: 0 5px;
  background: linear-gradient(#c8c8c8, var(--chrome) 5px);
  font-size: 15px;
}

.namebox,
.fx-box,
.fbar {
  display: flex;
  align-items: center;
  height: 31px;
  border: 1px solid var(--line);
  background: #fdfdfd;
}

.namebox {
  width: 102px;
  margin-right: 13px;
  padding: 0 5px 0 7px;
}

.namebox input {
  flex: 1;
  min-width: 0;
  padding-top: 3px;
  font-weight: 300;
}

.fx-box {
  width: 110px;
  margin: 0 3px 0 14px;
}

.fx-box button {
  flex: 1;
}

.fx {
  color: #666;
  font-family: "Liberation Serif", serif;
  font-size: 17px;
  font-style: italic;
  font-weight: bold;
}

.fx span {
  font-size: 12px;
}

.fbar {
  flex: 1;
  padding-right: 3px;
}

.fbar input {
  flex: 1;
  min-width: 0;
}

/* sheet */
.sheet-area {
  display: flex;
  flex: 1;
  min-height: 0;
}

.sheet {
  position: relative;
  flex: 1;
  min-width: 0;
  overflow: hidden;
}

.grid {
  width: max-content;
  border-spacing: 0;
  table-layout: fixed;
  color: #000;
  font-size: 15px;
  font-weight: 300;
}

.c-row { width: 29px; }
.c-month { width: 45px; }
.c-avg { width: 59px; }
.c-empty { width: 72px; }

.grid th,
.grid td {
  height: 25px;
  padding: 0 0 2px;
  line-height: 20px;
}

.grid th {
  font-weight: 300;
  text-align: center;
}

.grid thead th,
.grid thead td {
  border-right: 1px solid #ababab;
  border-bottom: 1px solid #9b9b9b;
  border-image: linear-gradient(#d8d8d8, #999) 1;
  border-image-width: 0 1px 1px 0;
  background: var(--chrome);
}

.corner svg {
  margin: 4px 0 0 8px;
}

.grid tbody th {
  border-right: 1px solid #9b9b9b;
  border-bottom: 1px solid #b5b5b5;
  background: var(--chrome);
}

.grid tbody td {
  border-right: 1px solid #d4d4d4;
  border-bottom: 1px solid #d4d4d4;
  background: #fff;
}

.grid tbody .num {
  padding-right: 3px;
  border-color: #000;
  text-align: right;
}

.grid tbody td:nth-child(10) {
  border-right-width: 2px;
}

/* floats over the cells */
.chart {
  position: absolute;
  left: 479px;
  top: 31px;
  width: 481px;
  height: 239px;
  border: 1px solid #d9d9d9;
  background: #fff;
}

.chart h2 {
  position: absolute;
  top: 10px;
  left: 0;
  width: 100%;
  margin: 0;
  color: #595959;
  font-size: 19px;
  font-weight: 300;
  line-height: 26px;
  text-align: center;
  font-feature-settings: normal;
}

.chart text {
  fill: #595959;
  font-size: 11px;
}

.line {
  stroke: #d9d9d9;
}

.axis {
  stroke: #bfbfbf;
}

.vscroll {
  display: flex;
  flex-direction: column;
  justify-content: space-between;
  flex: none;
  width: 15px;
  margin: 2px 3px 0 4px;
  background: #dadada;
}

.vscroll button,
.hscroll button {
  width: 15px;
  height: 15px;
  border: 1px solid #ababab;
  background: #fff;
}

.vthumb {
  height: 17px;
  margin: 18px 0 auto;
  border: 1px solid #ababab;
  background: #fff;
}

.sheetbar {
  display: flex;
  align-items: center;
  flex: none;
  height: 28px;
  padding-right: 21px;
  border-top: 1px solid #9b9b9b;
}

.sheetnav {
  display: flex;
  gap: 24px;
  width: 100px;
  padding-left: 27px;
}

.sheet-tab {
  align-self: flex-start;
  width: 73px;
  height: 25px;
  margin-top: -1px;
  border: 1px solid #9b9b9b;
  border-width: 0 1px 2px;
  border-bottom-color: var(--green);
  background: #fff;
  color: var(--green);
  font-family: "Noto Sans", sans-serif;
  font-size: 13px;
  line-height: 26px;
  text-align: center;
}

.add {
  margin-left: 32px;
}

.grip {
  margin: 0 14px 0 auto;
}

.hscroll {
  display: flex;
  width: 376px;
}

.htrack {
  flex: 1;
  background: #dadada;
}

.hthumb {
  width: 60%;
  height: 15px;
  margin-left: 24%;
  border: 1px solid #ababab;
  background: #fff;
}

.status {
  display: flex;
  align-items: center;
  flex: none;
  height: 22px;
  padding: 0 19px 0 8px;
  border-top: 1px solid #c8c6c4;
  background: var(--ribbon);
}

.views {
  display: flex;
  margin-left: auto;
}

.views button {
  width: 40px;
  height: 21px;
}

.views .active {
  background: #d2d0ce;
}

.zoom-btn {
  width: 9px;
  height: 20px;
}

.views + .zoom-btn {
  margin-left: 5px;
}

.status input {
  width: 100px;
  height: 12px;
  margin: 0 4px 0 5px;
  appearance: none;
  background: linear-gradient(#aaa, #aaa) center / 100% 1px no-repeat;
}

.status input::-webkit-slider-thumb {
  appearance: none;
  width: 5px;
  height: 11px;
  background: #666;
}

.pct {
  width: 46px;
  font-family: "Noto Sans", sans-serif;
  text-align: right;
}
```
